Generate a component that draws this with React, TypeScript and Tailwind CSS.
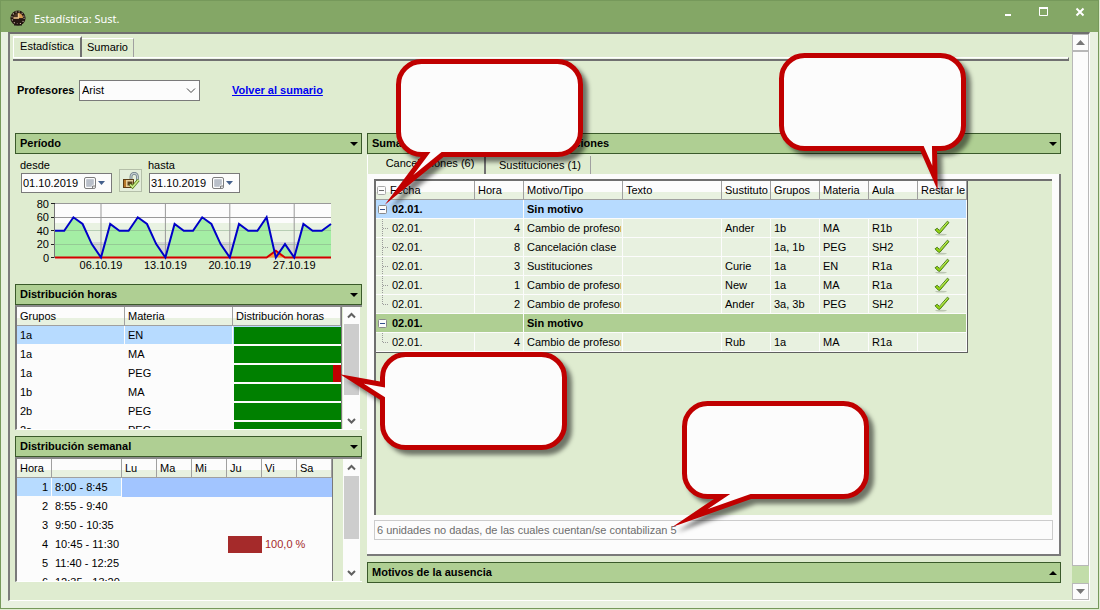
import { FC, ReactNode, useState } from 'react';
import clsx from 'clsx';

interface SectionHeaderProps {
    children: ReactNode;
    collapsed?: boolean;
}

const SectionHeader: FC<SectionHeaderProps> = ({ children, collapsed }) => (
    <h2 className='shrink-0'>
        <button type='button' className='flex h-[21px] w-full items-center justify-between border border-[#3a5a2a] bg-[#afcf93] pr-[3px] pl-1 font-bold'>
            <span>{children}</span>
            <svg width='8' height='4' viewBox='0 0 8 4' aria-hidden='true'>
                <path d={collapsed ? 'M0 4h8L4 0z' : 'M0 0h8L4 4z'} fill='#000' />
            </svg>
        </button>
    </h2>
);

const ClockIcon = () => (
    <svg width='16' height='16' viewBox='0 0 16 16' aria-hidden='true'>
        <circle cx='8' cy='8' r='7.6' fill='#22160f' />
        <circle cx='8' cy='7.8' r='6.1' fill='none' stroke='#dcc9b6' strokeWidth='1.1' strokeDasharray='1 2.19' />
        <circle cx='8' cy='8' r='5' fill='#4a3222' />
        <path d='M8 3A5 5 0 0 1 13 8H8z' fill='#d59a50' />
        <path d='M3 8.500h10A5 5 0 0 1 3 8.500z' fill='#241711' />
        <path d='M3.500 8h5.500M8.500 8V3.500' stroke='#f0c890' strokeWidth='1.4' />
        <path d='M4 14.800h8' stroke='#1c1210' strokeWidth='1.4' />
    </svg>
);

const CalendarIcon = () => (
    <svg width='27' height='13' viewBox='0 0 27 13' aria-hidden='true'>
        <rect x='.5' y='.5' width='11' height='11' rx='1.5' fill='#fcfcfc' stroke='#7d7d7d' />
        <path d='M2.5 3h7M2.5 5h7M2.5 7h7M2.5 9h5M3 2.5v7M5 2.5v7M7 2.5v7M9 2.5v5' stroke='#a3abb8' strokeWidth='1' />
        <path d='M8.5 12v-3h3' fill='#e3e3e3' stroke='#7d7d7d' />
        <path d='M14 4h7l-3.5 4z' fill='#44608c' />
    </svg>
);

const LockIcon = () => (
    <svg width='18' height='18' viewBox='0 0 18 18' aria-hidden='true'>
        <path d='M9 7V4.5a3.2 3.2 0 0 1 6.400 0V9' fill='none' stroke='#6e7f88' strokeWidth='2.8' />
        <path d='M9 7V4.5a3.2 3.2 0 0 1 6.400 0V9' fill='none' stroke='#c2ccd0' strokeWidth='1.2' />
        <rect x='1.5' y='7.5' width='10' height='8' fill='#e8cf9c' stroke='#5c3d16' />
        <path d='M3 8v7' stroke='#b5772a' strokeWidth='2' />
        <path d='M5.5 9.500h5v4h-5z' fill='#5a4420' />
        <path d='M8 12.5l2.500 2.5 6-7' fill='none' stroke='#4e7a12' strokeWidth='3' />
        <path d='M8 12.5l2.500 2.5 6-7' fill='none' stroke='#cdeb8c' strokeWidth='1.6' />
    </svg>
);

const CheckIcon = () => (
    <svg width='16' height='16' viewBox='0 0 16 16' role='img' aria-label='Sí' className='mx-auto'>
        <ellipse cx='7' cy='14.6' rx='6' ry='.8' fill='#bcc6b3' />
        <path d='M1 9.800L3.200 8.200L5.400 10.400L13.400 1.200L15 2.600L6 13.200H4.400z' fill='#93d411' stroke='#4f8020' strokeWidth='1' strokeLinejoin='round' />
        <path d='M6.500 10.200L13.500 2.200' stroke='#c9f27a' strokeWidth='.8' />
    </svg>
);

const ExpandBox = ({ faded }: { faded?: boolean }) => (
    <button type='button' aria-label='Contraer' className='block h-[9px] w-[9px] shrink-0'>
        <svg width='9' height='9' viewBox='0 0 9 9' className='block'>
            <rect x='.5' y='.5' width='8' height='8' rx='1' fill='#fcfcfc' stroke={faded ? '#a8a8a8' : '#8a8a8a'} />
            <path d='M2 4.5h5' stroke={faded ? '#6c6c6c' : '#33508c'} />
        </svg>
    </button>
);

const TreeLine = ({ last }: { last?: boolean }) => (
    <svg width='15' height='18' viewBox='0 0 15 18' className='shrink-0' aria-hidden='true'>
        <path d={last ? 'M6.5 0v9' : 'M6.5 0v18'} stroke='#9a9a9a' strokeDasharray='1 1' />
        <path d='M7 9.5h6' stroke='#9a9a9a' strokeDasharray='1 1' />
    </svg>
);

const DateField = ({ id, label, value }: { id: string; label: string; value: string }) => {
    const [date, setDate] = useState(value);
    return (
        <div>
            <label htmlFor={id} className='-ml-px block h-4 leading-4'>{label}</label>
            <div className='flex h-5 w-[91px] items-center border border-[#7a7a7a] bg-[#fcfcfc]'>
                <input id={id} value={date} onChange={({ target }) => setDate(target.value)} className='w-[63px] min-w-0 pl-px outline-none' />
                <button type='button' aria-label={`Calendario ${label}`}>
                    <CalendarIcon />
                </button>
            </div>
        </div>
    );
};

const lessons = [40, 40, 60, 50, 20, 0, 50, 40, 40, 60, 50, 20, 0, 50, 40, 40, 60, 50, 20, 0, 50, 40, 40, 60, 0, 20, 0, 50, 40, 40, 50];
const cancelled = lessons.map((_, i) => (i === 24 ? 10 : 0));
const toPoints = (values: number[]) => values.map((v, i) => `${40 + i * 9.2},${58.5 - v * 0.67}`).join(' ');

const PeriodChart = () => (
    <svg width='330' height='76' viewBox='0 0 330 76' className='block text-[11px]' role='img' aria-label='Período'>
        <rect x='40' y='5' width='276' height='54' fill='#d6d6d6' />
        <rect x='40' y='5' width='276' height='38' fill='#e9f2e2' />
        <rect x='40' y='5' width='276' height='19' fill='#fcfcfc' />
        <polygon points={`40,58.5 ${toPoints(lessons)} 316,58.5`} fill='#a4eea4' />
        {[80, 60, 40, 20, 0].map((v) => (
            <g key={v}>
                <path d={`M36 ${Math.round(58 - v * 0.67) + 0.5}h4`} stroke='#222' />
                {v > 0 && <path d={`M40 ${Math.round(58 - v * 0.67) + 0.5}h276`} stroke={v > 40 ? '#999' : '#86a886'} strokeOpacity={v > 40 ? 1 : 0.5} />}
                <text x='34' y={62.5 - v * 0.67} textAnchor='end'>{v}</text>
            </g>
        ))}
        {['06.10.19', '13.10.19', '20.10.19', '27.10.19'].map((d, i) => (
            <g key={d}>
                <path d={`M${86 + i * 64.4} 5v53`} stroke='#999' />
                <text x={86 + i * 64.4} y='70' textAnchor='middle'>{d}</text>
            </g>
        ))}
        <path d='M39.5 5v54' stroke='#777' />
        <polygon points={toPoints(cancelled)} fill='#ff9a3c' />
        <polyline points={toPoints(cancelled)} fill='none' stroke='#d40000' strokeWidth='2' />
        <polyline points={toPoints(lessons)} fill='none' stroke='#0000c8' strokeWidth='2' />
    </svg>
);

const PaneScrollbar = ({ thumb }: { thumb: string }) => (
    <div className='flex w-[17px] shrink-0 flex-col items-center bg-[#fcfcfc]'>
        <svg width='9' height='17' viewBox='0 0 9 17' aria-hidden='true'>
            <path d='M1 10.5L4.5 7L8 10.5' fill='none' stroke='#606060' strokeWidth='2' />
        </svg>
        <div className={clsx('w-[15px] bg-[#cdcdcd]', thumb)} />
        <svg width='9' height='17' viewBox='0 0 9 17' className='mt-auto' aria-hidden='true'>
            <path d='M1 7L4.5 10.5L8 7' fill='none' stroke='#606060' strokeWidth='2' />
        </svg>
    </div>
);

const headCell = 'h-[19px] border-r border-b border-[#a0a0a0] bg-[linear-gradient(to_bottom,#fcfcfc_62%,#e8f1e0_62%)] px-[3px] text-left font-normal whitespace-nowrap overflow-hidden';

const hours = [
    { group: '1a', subject: 'EN', red: 0 },
    { group: '1a', subject: 'MA', red: 0 },
    { group: '1a', subject: 'PEG', red: 8 },
    { group: '1b', subject: 'MA', red: 0 },
    { group: '2b', subject: 'PEG', red: 0 },
    { group: '2a', subject: 'PEG', red: 0 },
];

const HoursTable = () => (
    <table className='w-[325px] table-fixed border-separate border-spacing-0 border-r border-[#7a7a7a] bg-[#fcfcfc]'>
        <thead>
            <tr>
                <th className={headCell}>Grupos</th>
                <th className={headCell}>Materia</th>
                <th className={headCell}>Distribución horas</th>
            </tr>
        </thead>
        <tbody>
            {hours.map((row, i) => (
                <tr key={i} className={clsx(i === 0 && 'bg-[#b7dbff]')}>
                    <td className='h-[19px] border-r border-b border-[#fcfcfc] px-[3px]'>{row.group}</td>
                    <td className='h-[19px] border-r border-b border-[#fcfcfc] px-[3px]'>{row.subject}</td>
                    <td className='h-[19px] border-b border-[#fcfcfc] p-0 pl-px'>
                        <div className='flex h-[17px] justify-end bg-[#008000]'>
                            <div className='bg-[#c00000]' style={{ width: row.red }} />
                        </div>
                    </td>
                </tr>
            ))}
        </tbody>
    </table>
);

const week = ['8:00 - 8:45', '8:55 - 9:40', '9:50 - 10:35', '10:45 - 11:30', '11:40 - 12:25', '12:35 - 13:20'];
const days = ['Lu', 'Ma', 'Mi', 'Ju', 'Vi', 'Sa'];

const WeekTable = () => (
    <table className='w-[316px] table-fixed border-separate border-spacing-0 border-r border-[#7a7a7a]'>
        <colgroup>
            <col className='w-[35px]' />
            <col className='w-[70px]' />
            {days.map((d) => <col key={d} />)}
        </colgroup>
        <thead>
            <tr>
                <th className={headCell}>Hora</th>
                <th className={headCell} aria-label='Horario'></th>
                {days.map((d) => <th key={d} className={headCell}>{d}</th>)}
            </tr>
        </thead>
        <tbody>
            {week.map((time, i) => (
                <tr key={time}>
                    <td className={clsx('h-[19px] border-r border-b border-[#fcfcfc] px-[3px] text-right', i === 0 && 'bg-[#b7dbff]')}>{i + 1}</td>
                    <td className={clsx('h-[19px] border-r border-b border-[#fcfcfc] px-[3px] whitespace-nowrap', i === 0 && 'bg-[#b7dbff]')}>{time}</td>
                    {days.map((d) => (
                        <td key={d} className={clsx('h-[19px] p-0', i === 0 && 'bg-[#a2c5ff]')}>
                            {i === 3 && d === 'Ju' && <div className='ml-px h-[17px] bg-[#a52a2a]' />}
                            {i === 3 && d === 'Vi' && <div className='w-0 pl-[3px] leading-[15px] whitespace-nowrap text-[#a52a2a]'>100,0 %</div>}
                        </td>
                    ))}
                </tr>
            ))}
        </tbody>
    </table>
);

interface Cancellation {
    hour: number;
    type: string;
    substitute: string;
    groups: string;
    subject: string;
    room: string;
    subtract: boolean;
}

const groups: { date: string; reason: string; selected: boolean; rows: Cancellation[] }[] = [
    {
        date: '02.01.',
        reason: 'Sin motivo',
        selected: true,
        rows: [
            { hour: 4, type: 'Cambio de profesor', substitute: 'Ander', groups: '1b', subject: 'MA', room: 'R1b', subtract: true },
            { hour: 8, type: 'Cancelación clase', substitute: '', groups: '1a, 1b', subject: 'PEG', room: 'SH2', subtract: true },
            { hour: 3, type: 'Sustituciones', substitute: 'Curie', groups: '1a', subject: 'EN', room: 'R1a', subtract: true },
            { hour: 1, type: 'Cambio de profesor', substitute: 'New', groups: '1a', subject: 'MA', room: 'R1a', subtract: true },
            { hour: 2, type: 'Cambio de profesor', substitute: 'Ander', groups: '3a, 3b', subject: 'PEG', room: 'SH2', subtract: true },
        ],
    },
    {
        date: '02.01.',
        reason: 'Sin motivo',
        selected: false,
        rows: [{ hour: 4, type: 'Cambio de profesor', substitute: 'Rub', groups: '1a', subject: 'MA', room: 'R1a', subtract: false }],
    },
];

const bodyCell = 'h-[19px] border-r border-b border-[#fcfcfc] px-[3px] py-0';

const CancellationTable = () => (
    <table className='w-[592px] table-fixed border-separate border-spacing-0 border-r border-b border-[#5f5f5f]'>
        <colgroup>
            <col className='w-[99px]' />
            <col className='w-[49px]' />
            <col className='w-[99px]' />
            <col className='w-[99px]' />
            <col className='w-[49px]' />
            <col className='w-[49px]' />
            <col className='w-[49px]' />
            <col className='w-[49px]' />
            <col className='w-[49px]' />
        </colgroup>
        <thead>
            <tr>
                <th className={clsx(headCell, 'pl-px')}>
                    <div className='flex items-center gap-1'><ExpandBox faded />Fecha</div>
                </th>
                {['Hora', 'Motivo/Tipo', 'Texto', 'Sustituto', 'Grupos', 'Materia', 'Aula', 'Restar le'].map((h) => (
                    <th key={h} className={clsx(headCell, 'pr-0')}><div className='overflow-hidden'>{h}</div></th>
                ))}
            </tr>
        </thead>
        {groups.map((group, g) => (
            <tbody key={g}>
                <tr className={clsx('font-bold', group.selected ? 'bg-[#b7dbff]' : 'bg-[#afcf93]')}>
                    <td colSpan={2} className={clsx(bodyCell, 'pl-0.5')}>
                        <div className='flex items-center gap-[5px]'><ExpandBox />{group.date}</div>
                    </td>
                    <td colSpan={7} className={bodyCell}>{group.reason}</td>
                </tr>
                {group.rows.map((row, i) => (
                    <tr key={i} className='bg-[#e8f1e0]'>
                        <td className={clsx(bodyCell, 'pl-0')}>
                            <div className='flex h-[18px] items-center gap-px'><TreeLine last={i === group.rows.length - 1} />02.01.</div>
                        </td>
                        <td className={clsx(bodyCell, 'text-right')}>{row.hour}</td>
                        <td className={clsx(bodyCell, 'pr-px')}><div className='overflow-hidden whitespace-nowrap'>{row.type}</div></td>
                        <td className={bodyCell}></td>
                        <td className={bodyCell}>{row.substitute}</td>
                        <td className={clsx(bodyCell, 'whitespace-nowrap')}>{row.groups}</td>
                        <td className={bodyCell}>{row.subject}</td>
                        <td className={bodyCell}>{row.room}</td>
                        <td className={bodyCell}>{row.subtract && <CheckIcon />}</td>
                    </tr>
                ))}
            </tbody>
        ))}
    </table>
);

const callouts = [
    'M421.5 61.5H557.5A23 23 0 0 1 580.5 84.5V131.5A23 23 0 0 1 557.5 154.5H442.5L399 190L425.5 154.5H421.5A23 23 0 0 1 398.5 131.5V84.5A23 23 0 0 1 421.5 61.5Z',
    'M804.5 55.5H940.5A23 23 0 0 1 963.5 78.5V125.5A23 23 0 0 1 940.5 148.5H934.5L935 178L922 148.5H804.5A23 23 0 0 1 781.5 125.5V78.5A23 23 0 0 1 804.5 55.5Z',
    'M405.5 354.5H541.5A23 23 0 0 1 564.5 377.5V424.5A23 23 0 0 1 541.5 447.5H405.5A23 23 0 0 1 382.5 424.5V398.5L352 379L382.5 384.5V377.5A23 23 0 0 1 405.5 354.5Z',
    'M707.5 403.5H843.5A23 23 0 0 1 866.5 426.5V473.5A23 23 0 0 1 843.5 496.5H751L690 518L722 496.5H707.5A23 23 0 0 1 684.5 473.5V426.5A23 23 0 0 1 707.5 403.5Z',
];

const Callouts = () => (
    <svg width='1100' height='610' viewBox='0 0 1100 610' className='pointer-events-none absolute top-0 left-0' aria-hidden='true'>
        {callouts.map((d) => (
            <path key={d} d={d} fill='#fcfcfc' stroke='#c00000' strokeWidth='5' strokeMiterlimit='20' className='drop-shadow-[5px_5px_2px_rgba(0,0,0,0.5)]' />
        ))}
    </svg>
);

const App = () => {
    const [teacher, setTeacher] = useState('Arist');

    return (
        <div className="relative flex min-h-screen flex-col bg-[#dfecd0] pr-px pb-px font-['Liberation_Sans',Arial,sans-serif] text-[11px] leading-[15px] text-black">
            <div className='flex flex-1 flex-col border border-[#76995b] bg-[#e8f1e0]'>
                <header className='flex h-[31px] shrink-0 items-start justify-between bg-[#84a766]'>
                    <div className='flex h-full items-center gap-2 pt-[3px] pl-[9px]'>
                        <ClockIcon />
                        <h1 className="font-['Noto_Sans','Open_Sans',sans-serif] text-[11px] text-white">Estadística: Sust.</h1>
                    </div>
                    <div className='flex'>
                        <button type='button' aria-label='Minimizar' className='flex h-[21px] w-9 items-center justify-center'>
                            <svg width='10' height='10' viewBox='0 0 10 10'><path d='M2 8h6' stroke='#fff' strokeWidth='2' /></svg>
                        </button>
                        <button type='button' aria-label='Maximizar' className='flex h-[21px] w-9 items-center justify-center'>
                            <svg width='10' height='10' viewBox='0 0 10 10'><path d='M.5 1h8v7.500h-8z' fill='none' stroke='#fff' /><path d='M0 1h9' stroke='#fff' strokeWidth='2' /></svg>
                        </button>
                        <button type='button' aria-label='Cerrar' className='flex h-[21px] w-9 items-center justify-center'>
                            <svg width='10' height='10' viewBox='0 0 10 10'><path d='M1.500 1.500l7 7M8.500 1.500l-7 7' stroke='#fff' strokeWidth='2' /></svg>
                        </button>
                    </div>
                </header>

                <div className='mr-2 mb-[7px] ml-[7px] flex flex-1 border-t-2 border-r border-b border-l-2 border-t-[#6f6f6f] border-r-white border-b-white border-l-[#7c7c7c] bg-[#dfecd0]'>
                    <div className='flex min-w-0 flex-1 flex-col pt-0.5'>
                        <div className='flex items-end pl-[3px]' role='tablist'>
                            <button type='button' role='tab' aria-selected='true' className='h-[21px] w-[69px] border-t-2 border-r-2 border-l border-t-white border-r-[#707070] border-l-white pb-0.5'>Estadística</button>
                            <button type='button' role='tab' aria-selected='false' className='h-[19px] w-[52px] border-t border-r border-t-white border-r-[#a0a0a0] pb-0.5'>Sumario</button>
                        </div>
                        <div className='mr-[3px] ml-[3px] h-1 border-t border-r border-b-2 border-t-white border-r-[#707070] border-b-[#707070] bg-[#eef5e8]' />

                        <div className='flex items-center pt-[19px] pl-[7px]'>
                            <label htmlFor='teacher' className='w-[62px] font-bold'>Profesores</label>
                            <div className='relative'>
                                <select id='teacher' value={teacher} onChange={({ target }) => setTeacher(target.value)} className='block h-[21px] w-[121px] appearance-none rounded-none border border-[#7a7a7a] bg-[#fcfcfc] pl-0.5'>
                                    <option>Arist</option>
                                </select>
                                <svg width='10' height='6' viewBox='0 0 10 6' className='pointer-events-none absolute top-2 right-1' aria-hidden='true'>
                                    <path d='M1 .5L5 4.500L9 .5' fill='none' stroke='#444' />
                                </svg>
                            </div>
                            <a href='#sumario' className='ml-8 font-bold text-[#0000f0] underline'>Volver al sumario</a>
                        </div>

                        <div className='flex flex-1 gap-[5px] pt-8 pr-[11px] pb-[17px] pl-[5px]'>
                            <div className='w-[347px] shrink-0'>
                                <SectionHeader>Período</SectionHeader>
                                <div className='h-[130px]'>
                                    <div className='flex items-end gap-[7px] pt-[3px] pl-1.5'>
                                        <DateField id='from' label='desde' value='01.10.2019' />
                                        <button type='button' aria-label='Bloquear período' className='mb-px flex h-[23px] w-[23px] items-center justify-center border border-[#b4bfa9] bg-[#e4eedb]'>
                                            <LockIcon />
                                        </button>
                                        <DateField id='to' label='hasta' value='31.10.2019' />
                                    </div>
                                    <div className='pt-1.5'>
                                        <PeriodChart />
                                    </div>
                                </div>

                                <SectionHeader>Distribución horas</SectionHeader>
                                <div className='mb-1.5 flex h-[125px] justify-between overflow-hidden border-t-2 border-b border-l-2 border-t-[#8a8a8a] border-b-white border-l-[#7a7a7a] pr-0.5'>
                                    <HoursTable />
                                    <PaneScrollbar thumb='h-[71px]' />
                                </div>

                                <SectionHeader>Distribución semanal</SectionHeader>
                                <div className='flex h-[125px] justify-between overflow-hidden border-t-2 border-b border-l-2 border-t-[#8a8a8a] border-b-white border-l-[#7a7a7a] pr-0.5'>
                                    <div className='bg-[#fcfcfc]'>
                                        <WeekTable />
                                    </div>
                                    <PaneScrollbar thumb='h-[63px]' />
                                </div>
                            </div>

                            <div className='flex min-w-0 flex-1 flex-col'>
                                <SectionHeader>Sumario de cancelaciones y de sustituciones</SectionHeader>
                                <div className='flex h-5 shrink-0 items-end' role='tablist'>
                                    <button type='button' role='tab' aria-selected='true' className='h-[19px] w-[119px] border-r-2 border-r-[#707070] border-l border-l-white pb-0.5 pl-2'>Cancelaciones (6)</button>
                                    <button type='button' role='tab' aria-selected='false' className='h-[18px] w-[105px] border-r border-r-[#a0a0a0] pl-1'>Sustituciones (1)</button>
                                </div>
                                <div className='mb-1.5 flex flex-1 flex-col border-r-2 border-b-2 border-r-[#7a7a7a] border-b-[#7a7a7a] bg-[#fcfcfc] pt-[5px] pr-1.5 pb-[14px] pl-[7px]'>
                                    <div className='mr-px flex-1 overflow-hidden border-t-2 border-l-2 border-[#6f6f6f] bg-[#dfecd0]'>
                                        <CancellationTable />
                                    </div>
                                    <input readOnly aria-label='Resumen' value='6 unidades no dadas, de las cuales cuentan/se contabilizan 5' className='mt-[5px] h-5 border border-[#cccccc] pl-0.5 text-[#6d6d6d] outline-none' />
                                </div>
                                <SectionHeader collapsed>Motivos de la ausencia</SectionHeader>
                            </div>
                        </div>
                    </div>

                    <div className='flex w-[17px] shrink-0 flex-col bg-[#c2dda9]'>
                        <button type='button' aria-label='Subir' className='flex h-[17px] items-center justify-center border border-[#b8b8b8] bg-[#fcfcfc]'>
                            <svg width='9' height='5' viewBox='0 0 9 5'><path d='M0 5h9L4.500 0z' fill='#777' /></svg>
                        </button>
                        <div className='mb-[17px] flex-1 border border-[#b8b8b8] bg-[#fcfcfc]' />
                        <button type='button' aria-label='Bajar' className='flex h-[17px] items-center justify-center border border-[#b8b8b8] bg-[#fcfcfc]'>
                            <svg width='9' height='5' viewBox='0 0 9 5'><path d='M0 0h9L4.500 5z' fill='#777' /></svg>
                        </button>
                    </div>
                </div>
            </div>
            <Callouts />
        </div>
    );
};

export default App;
